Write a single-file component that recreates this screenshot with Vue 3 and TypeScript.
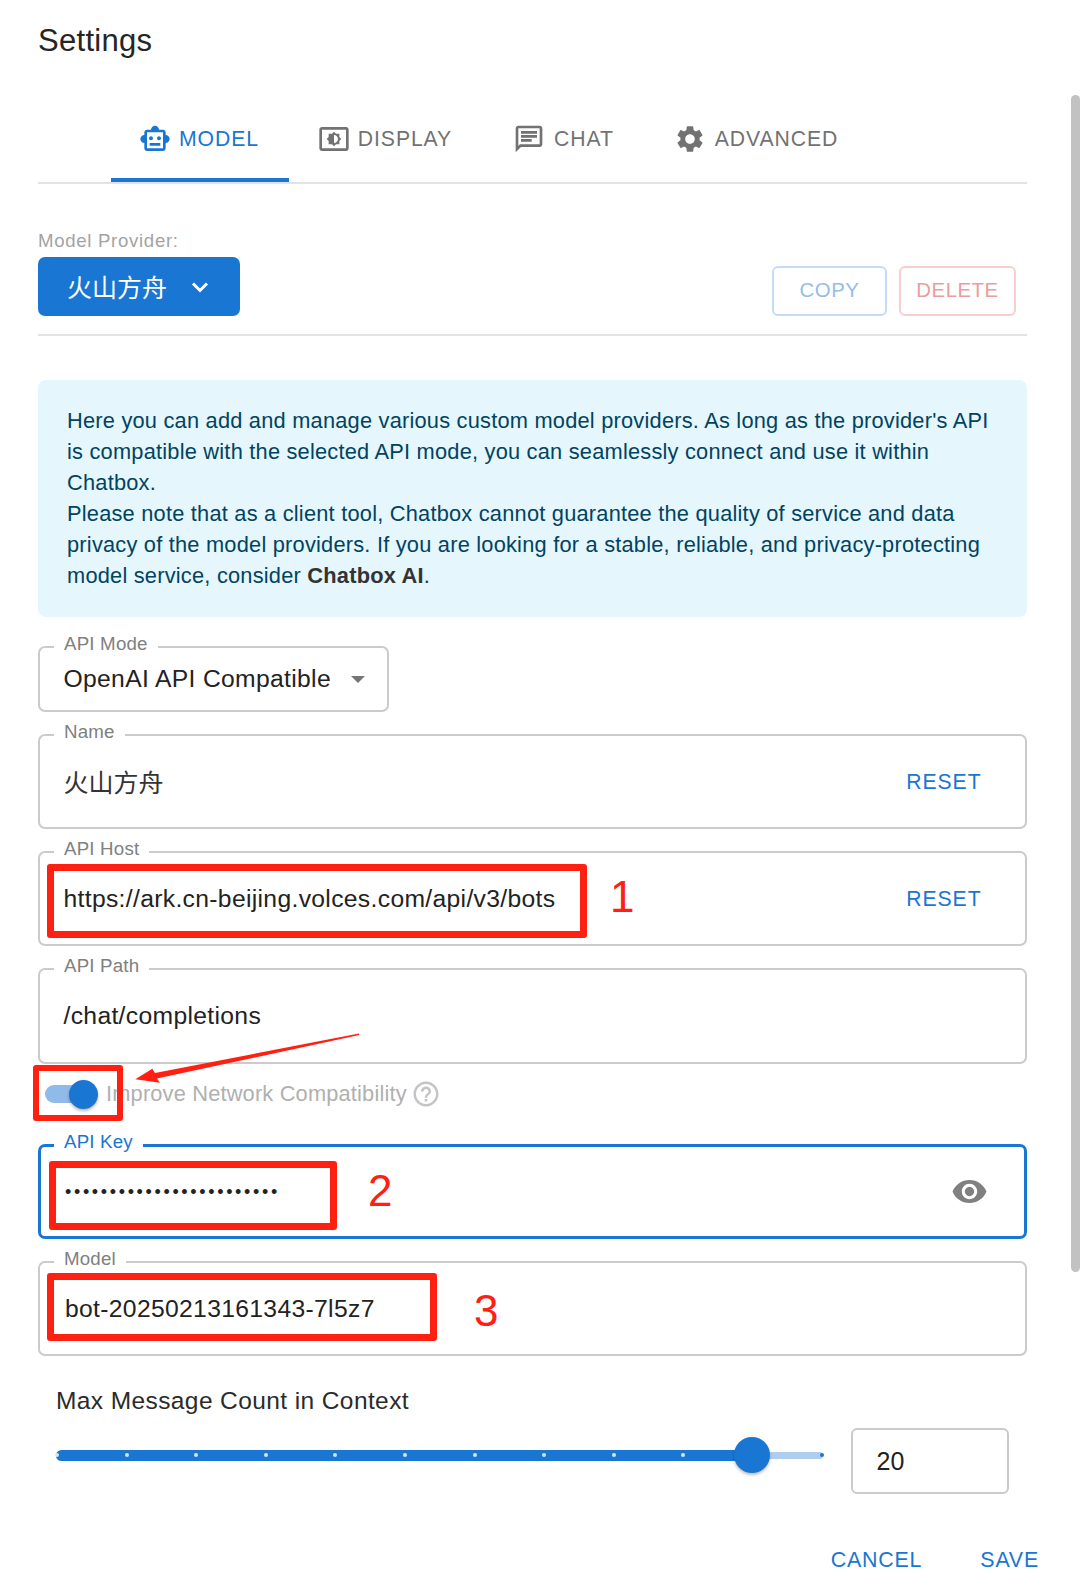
<script setup lang="ts">
interface Tab { label: string; d: string; active?: boolean }
const tabs: Tab[] = [
  { label: 'MODEL', active: true, d: 'M20 9V7c0-1.1-.9-2-2-2h-3c0-1.66-1.34-3-3-3S9 3.34 9 5H6c-1.1 0-2 .9-2 2v2c-1.66 0-3 1.34-3 3s1.34 3 3 3v4c0 1.1.9 2 2 2h12c1.1 0 2-.9 2-2v-4c1.66 0 3-1.34 3-3s-1.34-3-3-3zm-2 10H6V7h12v12zm-9-6c-.83 0-1.5-.67-1.5-1.5S8.17 10 9 10s1.5.67 1.5 1.5S9.83 13 9 13zm7.5-1.5c0 .83-.67 1.5-1.5 1.5s-1.5-.67-1.5-1.5.67-1.5 1.5-1.5 1.5.67 1.5 1.5zM8 15h8v2H8v-2z' },
  { label: 'DISPLAY', d: 'M21 3H3c-1.11 0-2 .89-2 2v14c0 1.11.89 2 2 2h18c1.11 0 2-.89 2-2V5c0-1.11-.89-2-2-2zm0 16.01H3V4.99h18v14.02zM8 16h2.5l1.5 1.5 1.5-1.5H16v-2.5l1.5-1.5-1.5-1.5V8h-2.5L12 6.5 10.5 8H8v2.5L6.5 12 8 13.5V16zm4-7c1.66 0 3 1.34 3 3s-1.34 3-3 3V9z' },
  { label: 'CHAT', d: 'M4 4h16v12H5.17L4 17.17V4m0-2c-1.1 0-1.99.9-1.99 2L2 22l4-4h14c1.1 0 2-.9 2-2V4c0-1.1-.9-2-2-2H4zm2 10h8v2H6v-2zm0-3h12v2H6V9zm0-3h12v2H6V6z' },
  { label: 'ADVANCED', d: 'M19.14 12.94c.04-.3.06-.61.06-.94 0-.32-.02-.64-.07-.94l2.03-1.58c.18-.14.23-.41.12-.61l-1.92-3.32c-.12-.22-.37-.29-.59-.22l-2.39.96c-.5-.38-1.03-.7-1.62-.94l-.36-2.54c-.04-.24-.24-.41-.48-.41h-3.84c-.24 0-.43.17-.47.41l-.36 2.54c-.59.24-1.13.57-1.62.94l-2.39-.96c-.22-.08-.47 0-.59.22L2.74 8.87c-.12.21-.08.47.12.61l2.03 1.58c-.05.3-.09.63-.09.94s.02.64.07.94l-2.03 1.58c-.18.14-.23.41-.12.61l1.92 3.32c.12.22.37.29.59.22l2.39-.96c.5.38 1.03.7 1.62.94l.36 2.54c.05.24.24.41.48.41h3.84c.24 0 .44-.17.47-.41l.36-2.54c.59-.24 1.13-.56 1.62-.94l2.39.96c.22.08.47 0 .59-.22l1.92-3.32c.12-.22.07-.47-.12-.61l-2.01-1.58zM12 15.6c-1.98 0-3.6-1.62-3.6-3.6s1.62-3.6 3.6-3.6 3.6 1.62 3.6 3.6-1.62 3.6-3.6 3.6z' },
]
const dotOffsets: number[] = Array.from({ length: 12 }, (_, i) => i * 69.6)
const keyDots = '•'.repeat(24)
</script>

<template>
  <div class="page">
    <h1 class="title">Settings</h1>

    <div class="tabs">
      <div v-for="t in tabs" :key="t.label" class="tab" :class="{ active: t.active }">
        <svg class="tab-icon" viewBox="0 0 24 24"><path :d="t.d" fill="currentColor" /></svg>
        <span>{{ t.label }}</span>
      </div>
    </div>

    <div class="provider">
      <div>
        <div class="provider-label">Model Provider:</div>
        <div class="provider-btn">
          <span class="provider-name">火山方舟</span>
          <svg class="chev" viewBox="0 0 18 12"><path d="M2 2.5 9 9.5 16 2.5" fill="none" stroke="#fff" stroke-width="3" /></svg>
        </div>
      </div>
      <div class="provider-actions">
        <div class="ghost copy">COPY</div>
        <div class="ghost del">DELETE</div>
      </div>
    </div>

    <div class="info">
      Here you can add and manage various custom model providers. As long as the provider's API is compatible with the selected API mode, you can seamlessly connect and use it within Chatbox.<br />
      Please note that as a client tool, Chatbox cannot guarantee the quality of service and data privacy of the model providers. If you are looking for a stable, reliable, and privacy-protecting model service, consider <b>Chatbox AI</b>.
    </div>

    <div class="field mode">
      <label class="float">API Mode</label>
      <span class="value">OpenAI API Compatible</span>
      <span class="caret"></span>
    </div>

    <div class="field">
      <label class="float">Name</label>
      <span class="value cjk">火山方舟</span>
      <span class="reset">RESET</span>
    </div>

    <div class="field">
      <label class="float">API Host</label>
      <span class="value">https://ark.cn-beijing.volces.com/api/v3/bots</span>
      <span class="reset">RESET</span>
    </div>

    <div class="field path">
      <label class="float">API Path</label>
      <span class="value">/chat/completions</span>
    </div>

    <div class="compat">
      <div class="switch"><span class="knob"></span></div>
      <span class="compat-text">Improve Network Compatibility</span>
      <svg class="help" viewBox="0 0 24 24"><path fill="#c4c4c4" d="M11 18h2v-2h-2v2zm1-16C6.48 2 2 6.48 2 12s4.48 10 10 10 10-4.48 10-10S17.52 2 12 2zm0 18c-4.41 0-8-3.59-8-8s3.59-8 8-8 8 3.59 8 8-3.59 8-8 8zm0-14c-2.21 0-4 1.79-4 4h2c0-1.1.9-2 2-2s2 .9 2 2c0 2-3 1.75-3 5h2c0-2.25 3-2.5 3-5 0-2.21-1.79-4-4-4z" /></svg>
    </div>

    <div class="field focused">
      <label class="float">API Key</label>
      <span class="value dots">{{ keyDots }}</span>
      <svg class="eye" viewBox="0 0 24 24"><path fill="#808080" d="M12 4.5C7 4.5 2.73 7.61 1 12c1.73 4.39 6 7.5 11 7.5s9.27-3.11 11-7.5c-1.73-4.39-6-7.5-11-7.5zM12 17c-2.76 0-5-2.24-5-5s2.24-5 5-5 5 2.24 5 5-2.24 5-5 5zm0-8c-1.66 0-3 1.34-3 3s1.34 3 3 3 3-1.34 3-3-1.34-3-3-3z" /></svg>
    </div>

    <div class="field">
      <label class="float">Model</label>
      <span class="value model-value">bot-20250213161343-7l5z7</span>
    </div>

    <div class="max-label">Max Message Count in Context</div>
    <div class="slider-row">
      <div class="slider">
        <div class="rail"></div>
        <div class="track"></div>
        <span v-for="(o, i) in dotOffsets" :key="i" class="mark" :class="{ off: i === 11 }" :style="{ left: o + 'px' }"></span>
        <div class="thumb"></div>
      </div>
      <div class="count">20</div>
    </div>

    <div class="footer">
      <span>CANCEL</span>
      <span>SAVE</span>
    </div>

    <div class="scrollbar"></div>

    <!-- red hand-drawn annotations lying over the screenshot -->
    <div class="mark-box box-host"></div>
    <div class="mark-box box-switch"></div>
    <div class="mark-box box-key"></div>
    <div class="mark-box box-model"></div>
    <span class="num num1">1</span>
    <span class="num num2">2</span>
    <span class="num num3">3</span>
    <svg class="arrow" viewBox="0 0 240 60" width="240" height="60">
      <path fill="#ff2012" d="M239 2.4 239.2 4 37 47.5 40 51.7 15.3 48.3 32.3 37.7 35 42Z" />
    </svg>
  </div>
</template>

<style>
html, body { margin: 0; background: #fff; }
</style>

<style scoped>
.page {
  position: relative;
  box-sizing: border-box;
  width: 1080px;
  height: 1596px;
  padding: 0 53px 0 38px;
  overflow: hidden;
  background: #fff;
  font-family: "Liberation Sans", "Noto Sans CJK SC", sans-serif;
  color: #222;
}
.title {
  margin: 0;
  height: 80px;
  line-height: 82px;
  font-size: 31px;
  font-weight: 400;
  letter-spacing: 0.3px;
  color: #252525;
}

.tabs {
  display: flex;
  margin-top: 16px;
  padding-left: 73px;
  border-bottom: 2px solid #e3e3e3;
  height: 86px;
}
.tab {
  position: relative;
  display: flex;
  align-items: center;
  gap: 8px;
  padding: 0 30px 0 28px;
  font-size: 21.2px;
  letter-spacing: 0.9px;
  color: #727272;
}
.tab:nth-child(2) { margin-left: 1px; }
.tab:nth-child(3) { margin-left: 3px; gap: 9px; }
.tab:nth-child(4) { margin-left: 2px; gap: 9px; }
.tab.active { color: #1976d2; }
.tab.active::after {
  content: "";
  position: absolute;
  left: 0;
  right: 0;
  bottom: 0;
  height: 4px;
  background: #1976d2;
}
.tab-icon { width: 32px; height: 32px; flex: none; }

.provider {
  display: flex;
  justify-content: space-between;
  align-items: flex-end;
  padding: 46px 11px 18px 0;
  border-bottom: 2px solid #e3e3e3;
}
.provider-label {
  height: 22px;
  line-height: 22px;
  margin-bottom: 5px;
  font-size: 18.6px;
  letter-spacing: 0.7px;
  color: #a3a3a3;
}
.provider-btn {
  display: flex;
  align-items: center;
  box-sizing: border-box;
  width: 202px;
  height: 59px;
  padding-left: 29px;
  gap: 24px;
  border-radius: 7px;
  background: #1976d2;
  color: #fff;
  font-size: 25px;
}
.provider-name { padding-bottom: 2px; }
.chev { width: 18px; height: 12px; flex: none; }
.provider-actions { display: flex; gap: 12px; }
.ghost {
  box-sizing: border-box;
  height: 50px;
  line-height: 44px;
  border: 2px solid;
  border-radius: 6px;
  text-align: center;
  font-size: 20.4px;
  letter-spacing: 0.5px;
}
.copy { width: 115px; color: #93bdea; border-color: #c5dcf5; }
.del { width: 117px; color: #ea9d9d; border-color: #f6cfcf; }

.info {
  margin-top: 44px;
  padding: 25px 29px 26px;
  border-radius: 8px;
  background: #e5f6fd;
  color: #014361;
  font-size: 21.8px;
  letter-spacing: 0.22px;
  line-height: 31px;
}
.info b { color: #333; }

.field {
  position: relative;
  display: flex;
  align-items: center;
  box-sizing: border-box;
  height: 95px;
  margin-top: 22px;
  padding: 0 23.5px;
  border: 2px solid #cbcbcb;
  border-radius: 7px;
}
.field.mode { width: 351px; height: 66px; margin-top: 29px; }
.field.path { height: 96px; }
.float {
  position: absolute;
  left: 14px;
  top: -15px;
  padding: 0 10px;
  background: #fff;
  line-height: 22px;
  font-size: 18.7px;
  letter-spacing: 0.2px;
  color: #808080;
}
.value {
  flex: 1;
  font-size: 24.7px;
  letter-spacing: 0.32px;
  color: #222;
}
.model-value { margin-left: 1.5px; }
.cjk { font-size: 25px; letter-spacing: 0; padding-bottom: 2px; color: #333; }
.caret {
  width: 0;
  height: 0;
  margin-right: -1px;
  border-left: 7px solid transparent;
  border-right: 7px solid transparent;
  border-top: 7px solid #757575;
}
.reset {
  margin-right: 20px;
  font-size: 21.2px;
  letter-spacing: 0.9px;
  color: #1976d2;
}
.compat {
  display: flex;
  align-items: center;
  height: 40px;
  margin-top: 10px;
  padding-left: 7px;
}
.switch {
  position: relative;
  width: 50px;
  height: 18px;
  border-radius: 9px;
  background: #90bbe8;
}
.knob {
  position: absolute;
  right: -3px;
  top: -5px;
  width: 29px;
  height: 29px;
  border-radius: 50%;
  background: #1976d2;
  box-shadow: 0 2px 3px rgba(0, 0, 0, .28);
}
.compat-text {
  margin-left: 11px;
  font-size: 21.8px;
  letter-spacing: 0.18px;
  color: #b0b0b0;
}
.help { width: 30px; height: 30px; margin-left: 4px; }

.field.focused {
  margin-top: 30px;
  border: 3px solid #1976d2;
  padding: 0 23px;
}
.field.focused .float { color: #1976d2; left: 13px; top: -16px; }
.dots {
  margin-left: 1px;
  font-size: 18px;
  letter-spacing: 2.65px;
  line-height: 1;
}
.eye { width: 37px; height: 37px; margin-right: 13px; }

.max-label {
  margin: 30px 0 0 18px;
  line-height: 30px;
  font-size: 24.5px;
  letter-spacing: 0.4px;
  color: #2b2b2b;
}
.slider-row {
  display: flex;
  align-items: flex-start;
  margin: 12px 0 0 18px;
}
.slider {
  position: relative;
  width: 766.5px;
  height: 36px;
  margin-top: 9px;
  flex: none;
}
.rail {
  position: absolute;
  left: 0;
  right: 0;
  top: 14.5px;
  height: 7px;
  border-radius: 4px;
  background: #afcdee;
}
.track {
  position: absolute;
  left: 0;
  top: 12.5px;
  width: 695px;
  height: 11px;
  border-radius: 6px;
  background: #1976d2;
}
.mark {
  position: absolute;
  top: 16px;
  width: 4px;
  height: 4px;
  margin-left: -1px;
  border-radius: 50%;
  background: #d4e6f8;
}
.mark.off { background: #1976d2; margin-left: -2px; }
.thumb {
  position: absolute;
  left: 678px;
  top: 0;
  width: 36px;
  height: 36px;
  border-radius: 50%;
  background: #1976d2;
  box-shadow: 0 2px 3px rgba(0, 0, 0, .25);
}
.count {
  display: flex;
  align-items: center;
  box-sizing: border-box;
  width: 158px;
  height: 66px;
  margin-left: 28px;
  padding: 0 24px;
  border: 2px solid #cbcbcb;
  border-radius: 6px;
  font-size: 25px;
  color: #222;
}
.footer {
  display: flex;
  justify-content: flex-end;
  gap: 58px;
  margin: 51px -12px 0 0;
  line-height: 30px;
  font-size: 21.4px;
  letter-spacing: 0.8px;
  color: #1976d2;
}

.scrollbar {
  position: absolute;
  right: 0;
  top: 95px;
  width: 9px;
  height: 1177px;
  border-radius: 5px;
  background: #c2c2c2;
}

.mark-box {
  position: absolute;
  box-sizing: border-box;
  border: 7px solid #ff2012;
  border-radius: 3px;
}
.box-host { left: 47px; top: 864px; width: 540px; height: 74px; }
.box-switch { left: 33px; top: 1065px; width: 90px; height: 56px; border-width: 6px; }
.box-key { left: 49px; top: 1161px; width: 288px; height: 69px; }
.box-model { left: 47px; top: 1273px; width: 390px; height: 68px; }
.num {
  position: absolute;
  font-size: 44px;
  line-height: 50px;
  color: #ff2012;
}
.num1 { left: 610px; top: 872px; }
.num2 { left: 368px; top: 1166px; }
.num3 { left: 474px; top: 1286px; }
.arrow { position: absolute; left: 120px; top: 1031px; }
</style>
